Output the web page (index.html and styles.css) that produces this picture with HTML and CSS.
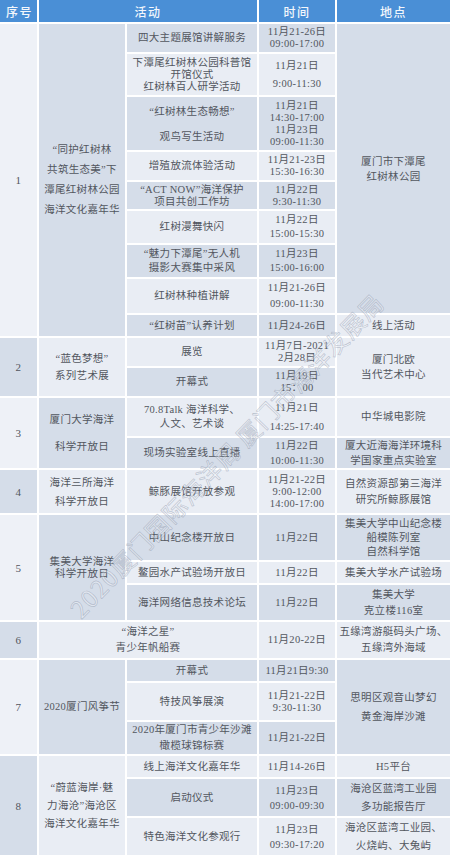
FILE: index.html
```html
<!DOCTYPE html>
<html lang="zh-CN">
<head>
<meta charset="utf-8">
<title>活动安排</title>
<link rel="stylesheet" href="styles.css">
</head>
<body>
<table class="sched">
  <colgroup>
    <col class="c-seq"><col class="c-grp"><col class="c-sub"><col class="c-time"><col class="c-loc">
  </colgroup>
  <thead>
    <tr class="h-head">
      <th>序号</th><th colspan="2">活动</th><th>时间</th><th>地点</th>
    </tr>
  </thead>
  <tbody>
    <tr class="h28">
      <td rowspan="9" class="seq lt">1</td>
      <td rowspan="9" class="grp dk lh20">“同护红树林<br>共筑生态美”下<br>潭尾红树林公园<br>海洋文化嘉年华</td>
      <td class="dk">四大主题展馆讲解服务</td>
      <td class="dk">11月21-26日<br>09:00-17:00</td>
      <td rowspan="8" class="dk lh15">厦门市下潭尾<br>红树林公园</td>
    </tr>
    <tr class="h41">
      <td class="lt">下潭尾红树林公园科普馆<br>开馆仪式<br>红树林百人研学活动</td>
      <td class="lt lh18">11月21日<br>9:00-11:30</td>
    </tr>
    <tr class="h53">
      <td class="dk lh25">“红树林生态畅想”<br>观鸟写生活动</td>
      <td class="dk">11月21日<br>14:30-17:00<br>11月23日<br>09:00-11:30</td>
    </tr>
    <tr class="h28">
      <td class="lt">增殖放流体验活动</td>
      <td class="lt">11月21-23日<br>15:30-16:30</td>
    </tr>
    <tr class="h27">
      <td class="dk">“ACT NOW”海洋保护<br>项目共创工作坊</td>
      <td class="dk">11月22日<br>9:30-11:30</td>
    </tr>
    <tr class="h32">
      <td class="lt">红树漫舞快闪</td>
      <td class="lt lh14">11月22日<br>15:00-15:30</td>
    </tr>
    <tr class="h32">
      <td class="dk lh14">“魅力下潭尾”无人机<br>摄影大赛集中采风</td>
      <td class="dk lh14">11月23日<br>15:00-16:00</td>
    </tr>
    <tr class="h34">
      <td class="lt">红树林种植讲解</td>
      <td class="lt lh16">11月21-26日<br>09:00-11:30</td>
    </tr>
    <tr class="h21">
      <td class="dk">“红树苗”认养计划</td>
      <td class="dk">11月24-26日</td>
      <td class="lt">线上活动</td>
    </tr>

    <tr class="h28">
      <td rowspan="2" class="seq dk">2</td>
      <td rowspan="2" class="grp lt lh17">“蓝色梦想”<br>系列艺术展</td>
      <td class="lt">展览</td>
      <td class="lt">11月7日-2021<br>2月28日</td>
      <td rowspan="2" class="lt lh15">厦门北欧<br>当代艺术中心</td>
    </tr>
    <tr class="h28">
      <td class="dk">开幕式</td>
      <td class="dk">11月19日<br>15：00</td>
    </tr>

    <tr class="h37">
      <td rowspan="2" class="seq lt">3</td>
      <td rowspan="2" class="grp dk lh27">厦门大学海洋<br>科学开放日</td>
      <td class="lt lh14">70.8Talk 海洋科学、<br>人文、艺术谈</td>
      <td class="lt lh19">11月21日<br>14:25-17:40</td>
      <td class="lt">中华城电影院</td>
    </tr>
    <tr class="h29">
      <td class="dk">现场实验室线上直播</td>
      <td class="dk lh15">11月22日<br>10:00-11:30</td>
      <td class="dk lh15">厦大近海海洋环境科<br>学国家重点实验室</td>
    </tr>

    <tr class="h43">
      <td class="seq dk">4</td>
      <td class="grp lt lh19">海洋三所海洋<br>科学开放日</td>
      <td class="lt">鲸豚展馆开放参观</td>
      <td class="lt">11月21-22日<br>9:00-12:00<br>14:00-17:00</td>
      <td class="lt lh16">自然资源部第三海洋<br>研究所鲸豚展馆</td>
    </tr>

    <tr class="h45">
      <td rowspan="3" class="seq lt">5</td>
      <td rowspan="3" class="grp dk">集美大学海洋<br>科学开放日</td>
      <td class="dk">中山纪念楼开放日</td>
      <td class="dk">11月22日</td>
      <td class="dk lh14">集美大学中山纪念楼<br>船模陈列室<br>自然科学馆</td>
    </tr>
    <tr class="h21">
      <td class="lt">鳌园水产试验场开放日</td>
      <td class="lt">11月22日</td>
      <td class="lt">集美大学水产试验场</td>
    </tr>
    <tr class="h35">
      <td class="dk">海洋网络信息技术论坛</td>
      <td class="dk">11月22日</td>
      <td class="dk lh16">集美大学<br>克立楼116室</td>
    </tr>

    <tr class="h36">
      <td class="seq dk">6</td>
      <td colspan="2" class="lt lh16">“海洋之星”<br>青少年帆船赛</td>
      <td class="lt">11月20-22日</td>
      <td class="lt lh16">五缘湾游艇码头广场、<br>五缘湾外海域</td>
    </tr>

    <tr class="h21">
      <td rowspan="3" class="seq lt">7</td>
      <td rowspan="3" class="grp dk">2020厦门风筝节</td>
      <td class="dk">开幕式</td>
      <td class="dk">11月21日9:30</td>
      <td rowspan="3" class="dk lh19">思明区观音山梦幻<br>黄金海岸沙滩</td>
    </tr>
    <tr class="h37">
      <td class="lt">特技风筝展演</td>
      <td class="lt">11月21-22日<br>9:30-11:30</td>
    </tr>
    <tr class="h31">
      <td class="dk lh16">2020年厦门市青少年沙滩<br>橄榄球锦标赛</td>
      <td class="dk">11月21-22日</td>
    </tr>

    <tr class="h21">
      <td rowspan="3" class="seq dk">8</td>
      <td rowspan="3" class="grp lt lh18">“蔚蓝海岸·魅<br>力海沧”海沧区<br>海洋文化嘉年华</td>
      <td class="lt">线上海洋文化嘉年华</td>
      <td class="lt">11月14-26日</td>
      <td class="lt">H5平台</td>
    </tr>
    <tr class="h37">
      <td class="dk">启动仪式</td>
      <td class="dk lh15">11月23日<br>09:00-09:30</td>
      <td class="dk lh18">海沧区蓝湾工业园<br>多功能报告厅</td>
    </tr>
    <tr class="h37">
      <td class="lt">特色海洋文化参观行</td>
      <td class="lt lh15">11月23日<br>09:30-17:20</td>
      <td class="lt lh18">海沧区蓝湾工业园、<br>火烧屿、大兔屿</td>
    </tr>
  </tbody>
</table>
<div class="watermark">2020厦门国际海洋周 厦门市海洋发展局</div>
</body>
</html>
```

FILE: styles.css
```css
html, body {
  margin: 0;
  padding: 0;
  background: #ffffff;
}
body {
  position: relative;
  width: 450px;
  height: 856px;
  overflow: hidden;
  font-family: "Liberation Serif", "Noto Sans CJK SC", serif;
  color: #52565e;
}
.sched {
  table-layout: fixed;
  width: 454px;
  margin: -2px 0 0 -2px;
  border-collapse: separate;
  border-spacing: 2px;
  background: #ffffff;
  font-size: 10.5px;
  letter-spacing: 0.3px;
}
.c-seq { width: 37px; }
.c-grp { width: 86px; }
.c-sub { width: 130px; }
.c-time { width: 76px; }
.c-loc { width: 113px; }

.sched th {
  background: #4a8fd6;
  color: #f3f7fc;
  font-family: "Noto Sans CJK SC", sans-serif;
  font-weight: 500;
  font-size: 12px;
  letter-spacing: 1.5px;
  padding: 0;
  text-align: center;
  vertical-align: middle;
}
.sched th:first-child { text-align: left; padding-left: 6px; }
.sched td {
  padding: 0;
  text-align: center;
  vertical-align: middle;
  line-height: 12px;
  overflow: hidden;
}
.seq { font-size: 11px; }
.grp { line-height: 13px; }

.dk { background: #d5dde9; }
.lt { background: #e9edf4; }
.seq.lt { background: #eef1f7; }

.lh14 { line-height: 14px !important; }
.lh15 { line-height: 15px !important; }
.lh16 { line-height: 16px !important; }
.lh17 { line-height: 17px !important; }
.lh18 { line-height: 18px !important; }
.lh19 { line-height: 19px !important; }
.lh20 { line-height: 20px !important; }
.lh25 { line-height: 25px !important; }
.lh27 { line-height: 27px !important; }

.h-head { height: 22px; }
.h21 { height: 21px; }
.h27 { height: 27px; }
.h28 { height: 28px; }
.h29 { height: 29px; }
.h31 { height: 31px; }
.h32 { height: 32px; }
.h34 { height: 34px; }
.h35 { height: 35px; }
.h36 { height: 36px; }
.h37 { height: 37px; }
.h41 { height: 41px; }
.h43 { height: 43px; }
.h45 { height: 45px; }
.h53 { height: 53px; }

.watermark {
  position: absolute;
  left: 226px;
  top: 455px;
  transform: translate(-50%, -50%) rotate(-46deg);
  white-space: nowrap;
  font-family: "Noto Sans CJK SC", sans-serif;
  font-size: 24px;
  letter-spacing: 1px;
  color: rgba(255, 255, 255, 0.3);
  -webkit-text-stroke: 0.7px rgba(120, 132, 155, 0.42);
  pointer-events: none;
}
```
